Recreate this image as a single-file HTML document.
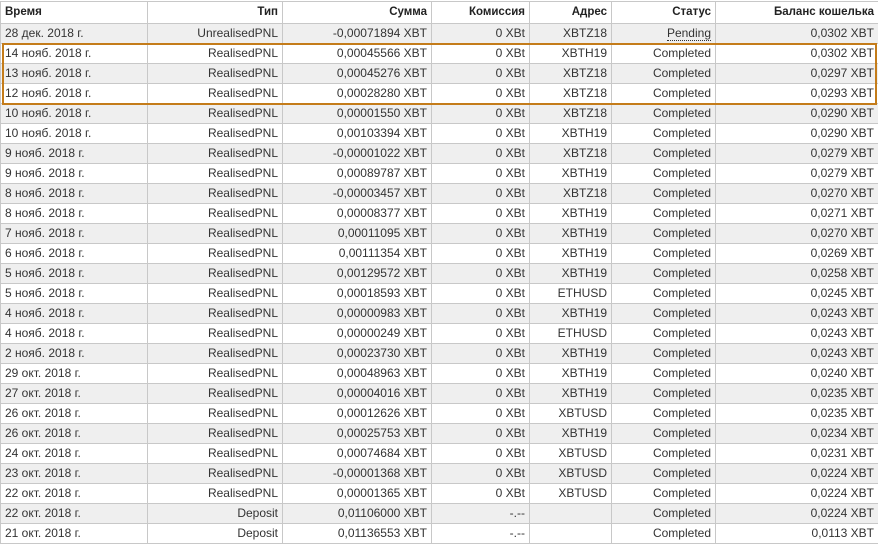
<!DOCTYPE html><html><head><meta charset="utf-8"><style>
body{margin:0;width:878px;height:544px;overflow:hidden;background:#fff;font-family:"Liberation Sans",sans-serif;font-size:12px;color:#333}
table{position:absolute;left:0;top:1px;border-collapse:collapse;table-layout:fixed;width:878px}
td,th{height:19px;padding:0 4px;border:1px solid #c8c8c8;text-align:right;white-space:nowrap;line-height:19px;overflow:hidden}
th{font-weight:bold;font-size:11.5px;height:21px;color:#222}
td:first-child,th:first-child{text-align:left}
tr:nth-child(even) td{background:#efefef}
.p{border-bottom:1px dotted #333;line-height:14px;display:inline-block}
#box{position:absolute;left:2px;top:43px;width:871px;height:58px;border:2px solid #c47c1a}
</style></head><body>
<table>
<colgroup><col style="width:147px"><col style="width:135px"><col style="width:149px"><col style="width:98px"><col style="width:82px"><col style="width:104px"><col style="width:163px"></colgroup>
<tr><th>Время</th><th>Тип</th><th>Сумма</th><th>Комиссия</th><th>Адрес</th><th>Статус</th><th>Баланс кошелька</th></tr>
<tr><td>28 дек. 2018 г.</td><td>UnrealisedPNL</td><td>-0,00071894 XBT</td><td>0 XBt</td><td>XBTZ18</td><td><span class="p">Pending</span></td><td>0,0302 XBT</td></tr>
<tr><td>14 нояб. 2018 г.</td><td>RealisedPNL</td><td>0,00045566 XBT</td><td>0 XBt</td><td>XBTH19</td><td>Completed</td><td>0,0302 XBT</td></tr>
<tr><td>13 нояб. 2018 г.</td><td>RealisedPNL</td><td>0,00045276 XBT</td><td>0 XBt</td><td>XBTZ18</td><td>Completed</td><td>0,0297 XBT</td></tr>
<tr><td>12 нояб. 2018 г.</td><td>RealisedPNL</td><td>0,00028280 XBT</td><td>0 XBt</td><td>XBTZ18</td><td>Completed</td><td>0,0293 XBT</td></tr>
<tr><td>10 нояб. 2018 г.</td><td>RealisedPNL</td><td>0,00001550 XBT</td><td>0 XBt</td><td>XBTZ18</td><td>Completed</td><td>0,0290 XBT</td></tr>
<tr><td>10 нояб. 2018 г.</td><td>RealisedPNL</td><td>0,00103394 XBT</td><td>0 XBt</td><td>XBTH19</td><td>Completed</td><td>0,0290 XBT</td></tr>
<tr><td>9 нояб. 2018 г.</td><td>RealisedPNL</td><td>-0,00001022 XBT</td><td>0 XBt</td><td>XBTZ18</td><td>Completed</td><td>0,0279 XBT</td></tr>
<tr><td>9 нояб. 2018 г.</td><td>RealisedPNL</td><td>0,00089787 XBT</td><td>0 XBt</td><td>XBTH19</td><td>Completed</td><td>0,0279 XBT</td></tr>
<tr><td>8 нояб. 2018 г.</td><td>RealisedPNL</td><td>-0,00003457 XBT</td><td>0 XBt</td><td>XBTZ18</td><td>Completed</td><td>0,0270 XBT</td></tr>
<tr><td>8 нояб. 2018 г.</td><td>RealisedPNL</td><td>0,00008377 XBT</td><td>0 XBt</td><td>XBTH19</td><td>Completed</td><td>0,0271 XBT</td></tr>
<tr><td>7 нояб. 2018 г.</td><td>RealisedPNL</td><td>0,00011095 XBT</td><td>0 XBt</td><td>XBTH19</td><td>Completed</td><td>0,0270 XBT</td></tr>
<tr><td>6 нояб. 2018 г.</td><td>RealisedPNL</td><td>0,00111354 XBT</td><td>0 XBt</td><td>XBTH19</td><td>Completed</td><td>0,0269 XBT</td></tr>
<tr><td>5 нояб. 2018 г.</td><td>RealisedPNL</td><td>0,00129572 XBT</td><td>0 XBt</td><td>XBTH19</td><td>Completed</td><td>0,0258 XBT</td></tr>
<tr><td>5 нояб. 2018 г.</td><td>RealisedPNL</td><td>0,00018593 XBT</td><td>0 XBt</td><td>ETHUSD</td><td>Completed</td><td>0,0245 XBT</td></tr>
<tr><td>4 нояб. 2018 г.</td><td>RealisedPNL</td><td>0,00000983 XBT</td><td>0 XBt</td><td>XBTH19</td><td>Completed</td><td>0,0243 XBT</td></tr>
<tr><td>4 нояб. 2018 г.</td><td>RealisedPNL</td><td>0,00000249 XBT</td><td>0 XBt</td><td>ETHUSD</td><td>Completed</td><td>0,0243 XBT</td></tr>
<tr><td>2 нояб. 2018 г.</td><td>RealisedPNL</td><td>0,00023730 XBT</td><td>0 XBt</td><td>XBTH19</td><td>Completed</td><td>0,0243 XBT</td></tr>
<tr><td>29 окт. 2018 г.</td><td>RealisedPNL</td><td>0,00048963 XBT</td><td>0 XBt</td><td>XBTH19</td><td>Completed</td><td>0,0240 XBT</td></tr>
<tr><td>27 окт. 2018 г.</td><td>RealisedPNL</td><td>0,00004016 XBT</td><td>0 XBt</td><td>XBTH19</td><td>Completed</td><td>0,0235 XBT</td></tr>
<tr><td>26 окт. 2018 г.</td><td>RealisedPNL</td><td>0,00012626 XBT</td><td>0 XBt</td><td>XBTUSD</td><td>Completed</td><td>0,0235 XBT</td></tr>
<tr><td>26 окт. 2018 г.</td><td>RealisedPNL</td><td>0,00025753 XBT</td><td>0 XBt</td><td>XBTH19</td><td>Completed</td><td>0,0234 XBT</td></tr>
<tr><td>24 окт. 2018 г.</td><td>RealisedPNL</td><td>0,00074684 XBT</td><td>0 XBt</td><td>XBTUSD</td><td>Completed</td><td>0,0231 XBT</td></tr>
<tr><td>23 окт. 2018 г.</td><td>RealisedPNL</td><td>-0,00001368 XBT</td><td>0 XBt</td><td>XBTUSD</td><td>Completed</td><td>0,0224 XBT</td></tr>
<tr><td>22 окт. 2018 г.</td><td>RealisedPNL</td><td>0,00001365 XBT</td><td>0 XBt</td><td>XBTUSD</td><td>Completed</td><td>0,0224 XBT</td></tr>
<tr><td>22 окт. 2018 г.</td><td>Deposit</td><td>0,01106000 XBT</td><td>-.--</td><td></td><td>Completed</td><td>0,0224 XBT</td></tr>
<tr><td>21 окт. 2018 г.</td><td>Deposit</td><td>0,01136553 XBT</td><td>-.--</td><td></td><td>Completed</td><td>0,0113 XBT</td></tr>
</table>
<div id="box"></div>
</body></html>
